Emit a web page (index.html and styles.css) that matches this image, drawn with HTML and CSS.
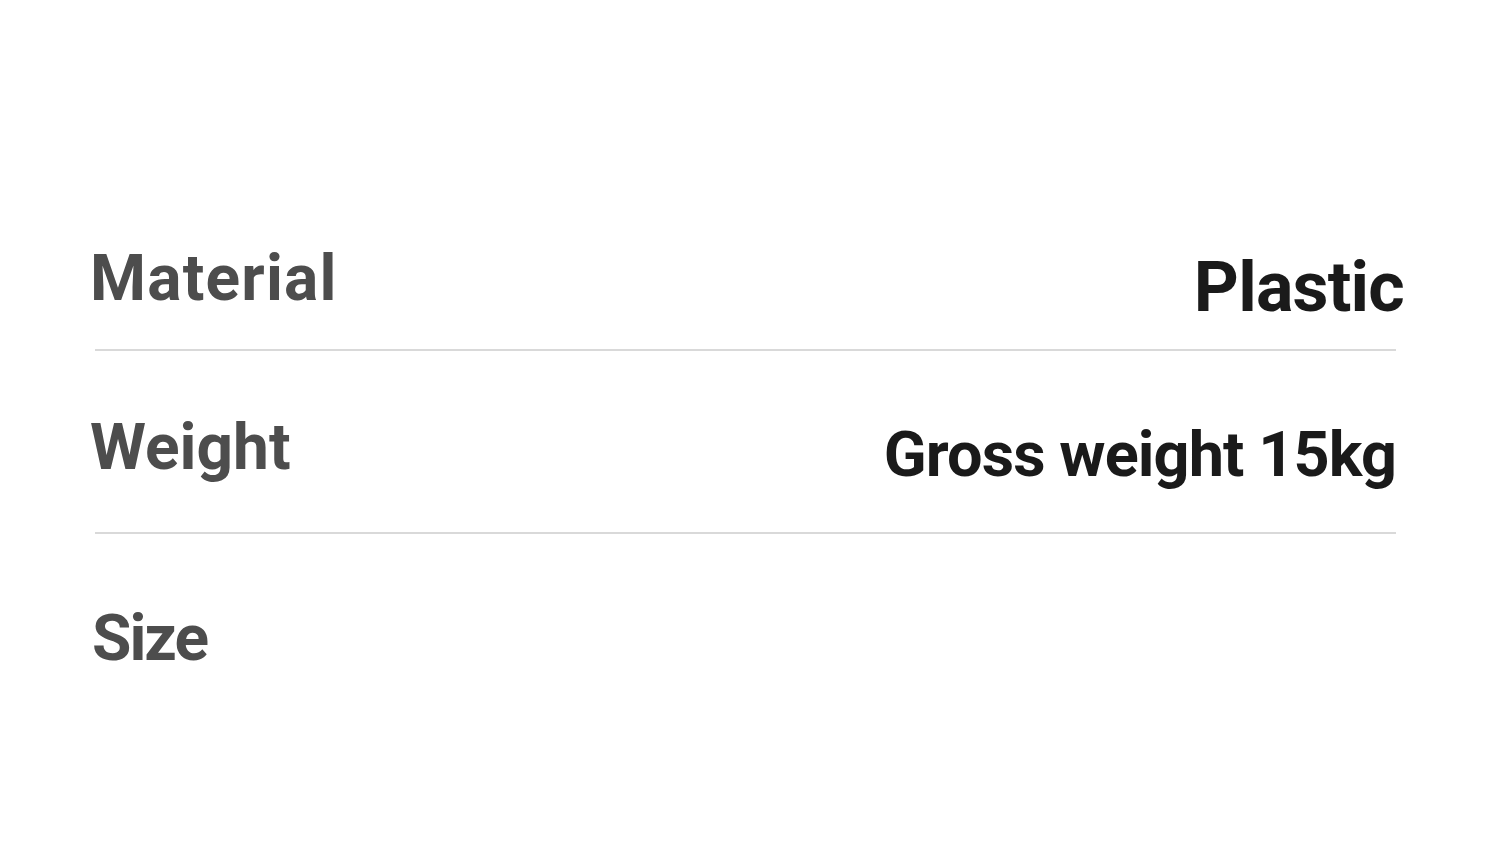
FILE: index.html
```html
<!DOCTYPE html>
<html lang="en">
<head>
<meta charset="utf-8">
<title>Specs</title>
<link rel="stylesheet" href="styles.css">
</head>
<body>
<div class="specs">
  <div class="row row-first">
    <div class="label">Material</div>
    <div class="value value-big">Plastic</div>
  </div>
  <div class="row row-mid">
    <div class="label label-tight">Weight</div>
    <div class="value">Gross weight 15kg</div>
  </div>
  <div class="row row-last">
    <div class="label label-tighter">Size</div>
    <div class="value"></div>
  </div>
</div>
</body>
</html>
```

FILE: styles.css
```css
html, body {
  margin: 0;
  padding: 0;
  background: #ffffff;
}
body {
  width: 1500px;
  height: 859px;
  overflow: hidden;
  font-family: Roboto, "Noto Sans", sans-serif;
  font-weight: 700;
}
.specs {
  padding: 201px 104px 0 95px;
}
.row {
  display: flex;
  justify-content: space-between;
  align-items: flex-start;
  border-bottom: 2px solid #d9d9d9;
}
.row-first { height: 148px; }
.row-mid { height: 181px; }
.row-last { border-bottom: none; height: 200px; }
.label {
  font-size: 64px;
  line-height: 1;
  letter-spacing: 1.2px;
  color: #4d4d4d;
  margin-left: -5px;
}
.label-tight {
  letter-spacing: 0;
}
.label-tighter {
  letter-spacing: -2px;
  margin-left: -3px;
}
.value {
  font-size: 63px;
  line-height: 1;
  letter-spacing: -0.9px;
  color: #1a1a1a;
}
.value-big {
  font-size: 70px;
  letter-spacing: -0.8px;
  margin-right: -8px;
}
.row-first .label { margin-top: 46px; }
.row-first .value { margin-top: 51px; }
.row-mid .label { margin-top: 65px; }
.row-mid .value { margin-top: 72px; }
.row-last .label { margin-top: 73px; }
```
